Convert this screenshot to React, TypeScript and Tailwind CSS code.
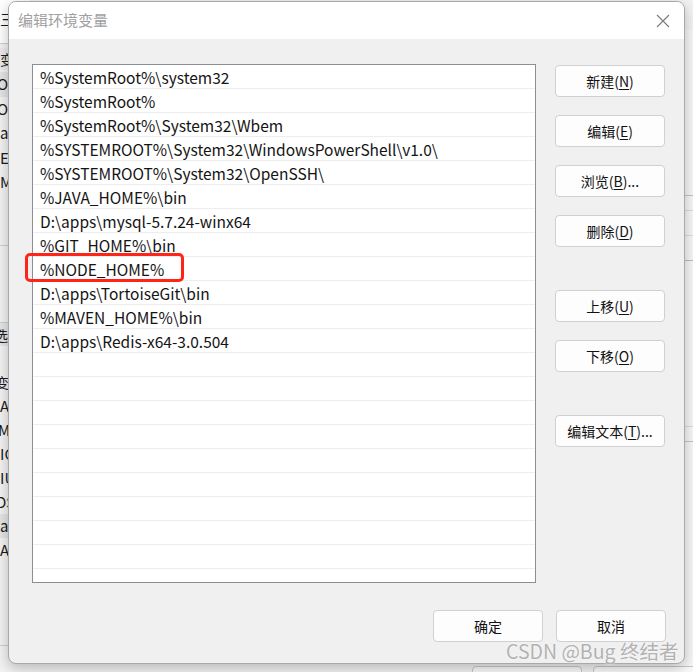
import React from "react";

const paths = [
  "%SystemRoot%\\system32",
  "%SystemRoot%",
  "%SystemRoot%\\System32\\Wbem",
  "%SYSTEMROOT%\\System32\\WindowsPowerShell\\v1.0\\",
  "%SYSTEMROOT%\\System32\\OpenSSH\\",
  "%JAVA_HOME%\\bin",
  "D:\\apps\\mysql-5.7.24-winx64",
  "%GIT_HOME%\\bin",
  "%NODE_HOME%",
  "D:\\apps\\TortoiseGit\\bin",
  "%MAVEN_HOME%\\bin",
  "D:\\apps\\Redis-x64-3.0.504",
];

const font = { fontFamily: '"Noto Sans CJK SC", "Noto Sans", sans-serif' };

const Btn = ({ label, hot, tail = ")", className = "" }: { label: string; hot?: string; tail?: string; className?: string }) => (
  <button
    className={`w-[110px] h-[32px] shrink-0 rounded-[4px] border border-[#d0d0d0] bg-[#fdfdfd] text-[14px] text-[#111] flex items-center justify-center ${className}`}
  >
    {label}
    {hot && (
      <>
        (<span className="underline underline-offset-2">{hot}</span>
        {tail}
      </>
    )}
  </button>
);

// the window behind the dialog, only its edges show
const Backdrop = () => (
  <div className="absolute inset-0 bg-[#f3f3f3] text-[15px] text-[#1a1a1a]">
    <div className="absolute left-0 top-0 w-[30px] h-[44px] bg-white border-b border-[#cfcfcf] pt-[8px]">三</div>
    <div className="absolute left-0 top-[48px] w-[30px] h-[22px] bg-[#ececec] text-[14px] leading-[22px]">变</div>
    <div className="absolute left-0 top-[72px] w-[30px] flex flex-col leading-[24.5px]">
      <div className="bg-[#e5e5e5] -ml-[3px]">Or</div>
      <div className="-ml-[3px]">Or</div>
      <div>a</div>
      <div>E</div>
      <div>M</div>
    </div>
    <div className="absolute left-0 top-[245px] w-[30px] border-t border-[#cfcfcf]" />
    <div className="absolute left-0 top-[322px] w-[30px] h-[24px] bg-[#e6e6e6] border-t border-[#cfcfcf] text-[14px] leading-[24px] -ml-[6px]">选</div>
    <div className="absolute left-0 top-[370px] w-[30px] flex flex-col leading-[24px]">
      <div className="text-[14px] -ml-[5px]">变</div>
      <div>A</div>
      <div className="-ml-[2px]">MA</div>
      <div>IC</div>
      <div>IU</div>
      <div className="-ml-[4px]">DS</div>
      <div className="bg-[#e5e5e5]">a</div>
      <div>A</div>
      <div className="h-[6px] overflow-hidden">P</div>
    </div>
    <div className="absolute left-0 top-[645px] w-[30px] border-t border-[#cfcfcf]" />
    <div className="absolute right-0 top-[30px] w-[20px] h-[640px] bg-[#f7f7f7]">
      <div className="mt-[165px] border-t border-[#c4c4c4]" />
      <div className="mt-[14px] border-t border-[#dcdcdc]" />
      <div className="mt-[24px] border-t border-[#dcdcdc]" />
      <div className="mt-[24px] border-t border-[#bdbdbd]" />
      <div className="mt-[165px] border-t border-[#dcdcdc]" />
      <div className="mt-[14px] border-t border-[#c4c4c4]" />
    </div>
    <div className="absolute left-[472px] top-[666px] w-[110px] h-[20px] rounded-[4px] border border-[#c8c8c8] bg-[#fafafa]" />
    <div className="absolute left-[593px] top-[666px] w-[110px] h-[20px] rounded-[4px] border border-[#c8c8c8] bg-[#fafafa]" />
  </div>
);

export default function App() {
  return (
    <div className="relative w-[693px] h-[672px] overflow-hidden" style={font}>
      <Backdrop />

      <div className="absolute left-[8px] top-[1px] w-[677px] h-[663px] rounded-[8px] border border-[#a9a9a9] bg-[#f0f0f0] overflow-hidden shadow-[0_4px_14px_rgba(0,0,0,0.25)] flex flex-col">
        <div className="h-[37px] shrink-0 bg-white flex items-center justify-between pl-[9px] pr-[14px]">
          <span className="text-[15px] text-[#a0a0a0]">编辑环境变量</span>
          <svg width="14" height="14" viewBox="0 0 14 14" className="mt-[1px]">
            <path d="M1 1 L13 13 M13 1 L1 13" stroke="#7a7a7a" strokeWidth="1.1" />
          </svg>
        </div>

        <div className="flex-1 flex flex-col pl-[23px] pt-[25px]">
          <div className="flex gap-[19px]">
            <div className="relative w-[504px] h-[519px] shrink-0 border border-[#8b8e94] bg-white overflow-hidden">
              {Array.from({ length: 22 }).map((_, i) => (
                <div key={i} className="h-[24px] border-b border-[#ededed] pl-[7px] text-[15.5px] leading-[24px] text-[#141414] whitespace-nowrap">
                  {paths[i] ?? ""}
                </div>
              ))}
            </div>

            <div className="flex flex-col pt-[1px]">
              <Btn label="新建" hot="N" />
              <Btn label="编辑" hot="E" className="mt-[18px]" />
              <Btn label="浏览" hot="B" tail=")..." className="mt-[18px]" />
              <Btn label="删除" hot="D" className="mt-[18px]" />
              <Btn label="上移" hot="U" className="mt-[43px]" />
              <Btn label="下移" hot="O" className="mt-[18px]" />
              <Btn label="编辑文本" hot="T" tail=")..." className="mt-[43px]" />
            </div>
          </div>

          <div className="flex justify-end gap-[13px] pr-[18px] mt-[27px]">
            <Btn label="确定" />
            <Btn label="取消" />
          </div>
        </div>
      </div>

      {/* annotation box */}
      <div className="absolute left-[25px] top-[253px] w-[159px] h-[29px] rounded-[5px] border-[3px] border-[#ff2418]" />

      {/* watermark */}
      <div className="absolute left-[506px] top-[638px] text-[19.5px] leading-[26px] text-[#b2b2b2] whitespace-nowrap [text-shadow:0_0_2px_#fff]">
        CSDN @Bug 终结者
      </div>
    </div>
  );
}
